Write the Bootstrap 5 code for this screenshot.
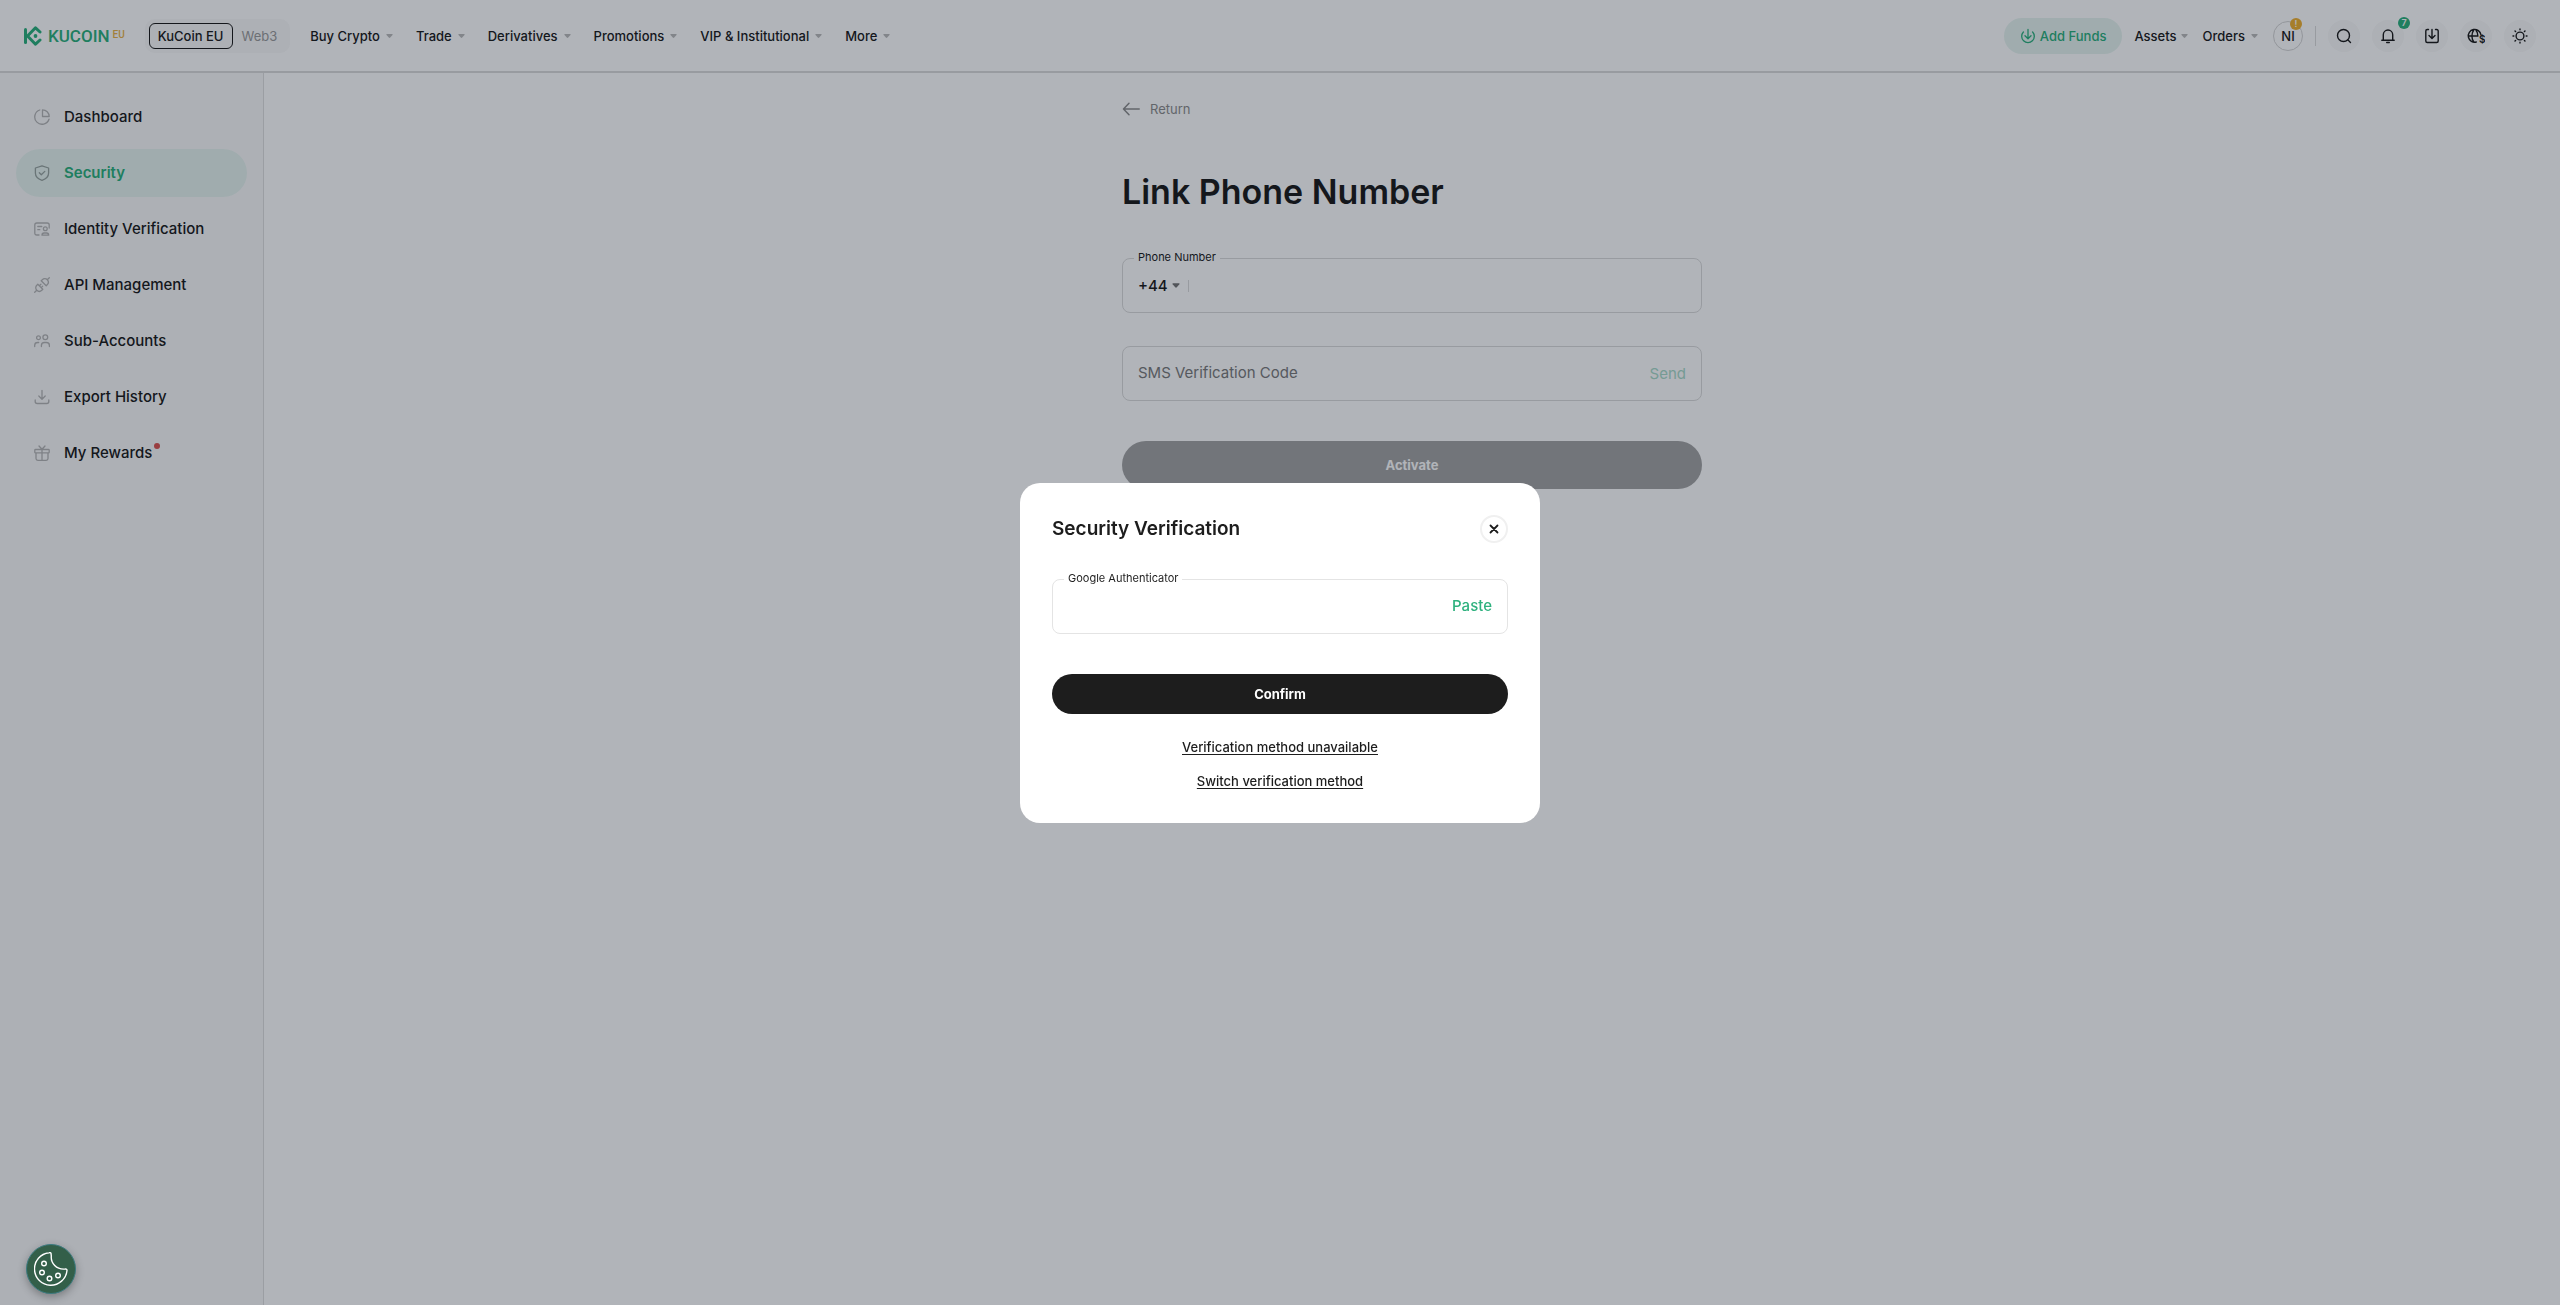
<!DOCTYPE html>
<html lang="en">
<head>
<meta charset="utf-8">
<meta name="viewport" content="width=device-width, initial-scale=1">
<title>Link Phone Number | KuCoin EU</title>
<link rel="stylesheet" href="https://cdn.jsdelivr.net/npm/bootstrap@5.3.0/dist/css/bootstrap.min.css">
<style>
:root{--kc-green:#2eb17e;--kc-ink:#1d1d1d;--kc-tint:#e7f4f0;--kc-line:#dcdcdc;--kc-soft:#f9f9f9;--kc-muted:#bbb}
body{font-family:Inter,"Liberation Sans",sans-serif;color:var(--kc-ink);font-size:13px;line-height:20px;background:#fff}
a{color:inherit;text-decoration:none}
svg{display:block;flex:none}
.line-icon{fill:none;stroke:currentColor;stroke-linecap:round;stroke-linejoin:round}
.shell{min-height:100vh}
.topbar{height:73px;padding:0 24px;border-bottom:2px solid var(--kc-line);font-weight:500}
.brand{color:var(--kc-green);gap:6px;margin-right:20px}
.brand-word{font:500 17px/20px Roboto,sans-serif}
.brand-region{font:500 10px/12px Roboto,sans-serif;color:#eab54a;margin:3px 0 0 3px}
.site-switch{background:var(--kc-soft);border-radius:10px;padding:4px;height:34px;margin-right:20px}
.site-switch button{border:1px solid transparent;background:none;border-radius:6px;padding:0 8px;color:#9c9c9c;font-weight:400}
.site-switch button.on{border-color:var(--kc-ink);color:var(--kc-ink);font-weight:500}
.menu{gap:23px}
.menu-item{gap:6px;border:0;background:none;padding:0;color:inherit;font-weight:500}
.caret{width:7px;height:4px;color:var(--kc-muted)}
.tools,.round-set{gap:12px}
.pair{gap:15px;margin-right:3px}
.funds{background:var(--kc-tint);color:var(--kc-green);height:36px;border-radius:18px;padding:0 16px;gap:4px}
.avatar{width:30px;height:30px;border:1px solid #d4d4d4;border-radius:50%}
.dot-badge{width:12px;height:12px;border-radius:50%;font-size:9px;line-height:12px;font-weight:600;color:#fff;text-align:center;top:-3px}
.dot-badge.warn{background:#f0b133;right:0;top:-4px}
.dot-badge.count{background:var(--kc-green);right:-6px}
.round-btn{width:32px;height:32px;border-radius:50%;background:var(--kc-soft);border:0;padding:0;color:var(--kc-ink)}
.split{width:1px;height:20px;background:var(--kc-line)}
.side{width:264px;background:#fafafa;border-right:1px solid #e0e0e0;padding:20px 16px;gap:8px}
.side-link{height:48px;border-radius:24px;padding:0 18px;gap:14px;font-size:15px;font-weight:500}
.side-link svg{color:#b6b6b6}
.side-link.on{background:var(--kc-tint);color:var(--kc-green);font-weight:600}
.side-link.on svg{color:#99a5a1}
.red-dot{width:6px;height:6px;border-radius:50%;background:#dd5552;margin:0 0 14px -12px}
.form-col{width:580px;padding-top:26px}
.back{color:#8e8e8e;gap:10px}
.page-title{font-size:34px;line-height:48px;font-weight:600;margin:47px 0 42px}
.field{height:55px;border:1px solid var(--kc-line);border-radius:8px;padding:0 15px}
.field + .field{margin-top:33px}
.field-label{font-size:11px;line-height:12px;padding:0 4px;background:#fff;left:11px;top:-8px}
.field input{border:0;outline:0;background:none;min-width:0;color:inherit;font-size:15px;padding:0 0 2px}
.field input::placeholder{color:#7c7c7c;opacity:1}
.code-pick{appearance:none;border:0;background:none;padding:0;font-size:15px;font-weight:500;color:inherit;width:30px}
.field .caret{width:8px;height:5px;color:#777}
.field .split{height:12px}
.text-btn{border:0;background:none;padding:0;font-size:15px;color:var(--kc-green)}
.text-btn:disabled{color:#aadbca}
.pill{border:0;border-radius:24px;background:var(--kc-ink);color:#fff;font-weight:700;height:48px;margin-top:40px}
.pill:disabled{background:#a5a5a5}
.modal-backdrop{background:rgba(0,10,25,.305)}
.verify .modal-dialog{max-width:520px}
.verify .modal-content{border:0;border-radius:20px;padding:32px;color:var(--kc-ink)}
.verify .field{border-color:#e4e4e4;margin-top:36px}
.verify .pill{height:40px}
.verify h2{font-size:19px;line-height:28px;font-weight:600}
.close-btn{width:28px;height:28px;border:2px solid #f0f0f0;border-radius:50%;background:#fff;padding:0;color:var(--kc-ink)}
.help-links{gap:14px;margin-top:23px;font-weight:500}
.help-links a{text-decoration:underline;text-underline-offset:2px}
.cookie{left:26px;bottom:11px;width:50px;height:50px;border-radius:50%;background:#335f49;border:1px solid #3c7a80;color:#fff;padding:0;z-index:1060;box-shadow:0 3px 8px rgba(0,0,0,.3)}
</style>
</head>
<body>
<svg width="0" height="0" class="position-absolute" aria-hidden="true"><symbol id="caret" viewBox="0 0 7 4"><path d="M1 0h5q1 .2.5 1L4.200 3.600q-.7.6-1.400 0L.500 1Q0 .2 1 0Z" fill="currentColor"/></symbol></svg>

<div class="shell d-flex flex-column">
  <header class="topbar d-flex align-items-center">
    <a href="#" class="brand d-flex align-items-center" aria-label="KuCoin EU">
      <svg width="18" height="20" viewBox="0 0 18 20"><g fill="none" stroke="currentColor" stroke-width="3" stroke-linecap="round" stroke-linejoin="round"><path d="M1.500 3.500v13"/><path d="M16 6 11.500 1.800 3.500 10l8 8.200L16 14"/></g><circle cx="11.500" cy="10" r="1.900" fill="currentColor"/></svg>
      <span class="d-flex align-items-start"><span class="brand-word">KUCOIN</span><span class="brand-region">EU</span></span>
    </a>
    <div class="site-switch d-flex">
      <button type="button" class="on">KuCoin EU</button><button type="button">Web3</button>
    </div>
    <nav class="menu d-flex">
      <button type="button" class="menu-item d-flex align-items-center">Buy Crypto<svg class="caret"><use href="#caret"/></svg></button>
      <button type="button" class="menu-item d-flex align-items-center">Trade<svg class="caret"><use href="#caret"/></svg></button>
      <button type="button" class="menu-item d-flex align-items-center">Derivatives<svg class="caret"><use href="#caret"/></svg></button>
      <button type="button" class="menu-item d-flex align-items-center">Promotions<svg class="caret"><use href="#caret"/></svg></button>
      <button type="button" class="menu-item d-flex align-items-center">VIP &amp; Institutional<svg class="caret"><use href="#caret"/></svg></button>
      <button type="button" class="menu-item d-flex align-items-center">More<svg class="caret"><use href="#caret"/></svg></button>
    </nav>
    <div class="tools d-flex align-items-center ms-auto">
      <a href="#" class="funds d-flex align-items-center">
        <svg class="line-icon" width="16" height="16" viewBox="0 0 16 16" stroke-width="1.300"><path d="M8 1.500v9M5 7.700l3 3 3-3M3.400 4A6.300 6.300 0 1 0 12.600 4"/></svg>Add Funds</a>
      <div class="pair d-flex">
        <button type="button" class="menu-item d-flex align-items-center gap-1">Assets<svg class="caret"><use href="#caret"/></svg></button>
        <button type="button" class="menu-item d-flex align-items-center">Orders<svg class="caret"><use href="#caret"/></svg></button>
      </div>
      <a href="#" class="avatar position-relative d-flex align-items-center justify-content-center">NI<span class="dot-badge warn position-absolute">!</span></a>
      <span class="split"></span>
      <div class="round-set d-flex">
        <button type="button" class="round-btn d-flex align-items-center justify-content-center" aria-label="Search"><svg class="line-icon" width="16" height="16" viewBox="0 0 16 16" stroke-width="1.400"><circle cx="7.500" cy="7.500" r="6"/><path d="m12 12 2.500 2.500"/></svg></button>
        <button type="button" class="round-btn position-relative d-flex align-items-center justify-content-center" aria-label="Notifications"><svg class="line-icon" width="16" height="16" viewBox="0 0 16 16" stroke-width="1.400"><path d="M1.800 12.200h12.400M3.300 12V6.700a4.700 4.700 0 0 1 9.400 0V12M6.700 14.500h2.600"/></svg><span class="dot-badge count position-absolute">7</span></button>
        <button type="button" class="round-btn d-flex align-items-center justify-content-center" aria-label="Download"><svg class="line-icon" width="16" height="16" viewBox="0 0 16 16" stroke-width="1.400"><path d="M4.500 1.500H3.300Q1.800 1.500 1.800 3v10q0 1.500 1.500 1.500h9.400q1.500 0 1.500-1.500V3q0-1.500-1.500-1.500h-1.200M8 1.500v8.800M5 7.500l3 3 3-3"/></svg></button>
        <button type="button" class="round-btn d-flex align-items-center justify-content-center" aria-label="Language and currency"><svg width="18" height="16" viewBox="0 0 18 16"><g class="line-icon" stroke-width="1.400"><path d="M9.300 14A6.400 6.400 0 1 1 14 6.800M1.600 8h9.400M7 1.700C4.200 5 4.200 11 7 14.200M8.700 1.700q2 2.600 2 5.300"/></g><text x="12" y="15" font-size="10" font-weight="600" fill="currentColor">$</text></svg></button>
        <button type="button" class="round-btn d-flex align-items-center justify-content-center" aria-label="Theme"><svg class="line-icon" width="16" height="16" viewBox="0 0 16 16" stroke-width="1.400"><circle cx="8" cy="8" r="3.900"/><path d="M8 1v.8M8 14.200v.8M1 8h.8M14.200 8h.8M3 3l.6.6M12.400 12.400l.6.6M3 13l.6-.6M12.400 3.600 13 3"/></svg></button>
      </div>
    </div>
  </header>

  <div class="d-flex flex-grow-1">
    <nav class="side d-flex flex-column flex-shrink-0">
      <a href="#" class="side-link d-flex align-items-center"><svg class="line-icon" width="16" height="16" viewBox="0 0 16 16" stroke-width="1.300"><path d="M5.800 1A7.300 7.300 0 1 0 15 10.200"/><path d="M8.500.8a6.800 6.800 0 0 1 6.700 6.700H8.500Z"/></svg>Dashboard</a>
      <a href="#" class="side-link on d-flex align-items-center"><svg class="line-icon" width="16" height="16" viewBox="0 0 16 16" stroke-width="1.300"><path d="M8 .8 14.600 3v5c0 3.800-2.600 6-6.600 7.300C4 14 1.400 11.800 1.400 8V3Z"/><path d="m5.300 7.800 2 2 3.500-3.400"/></svg>Security</a>
      <a href="#" class="side-link d-flex align-items-center"><svg class="line-icon" width="16" height="16" viewBox="0 0 16 16" stroke-width="1.300"><path d="M5 14H2.800Q.8 14 .8 12V4q0-2 2-2h10.400q2 0 2 2v3M3.800 5.500h4M3.800 8.700h2"/><circle cx="11.300" cy="7.800" r="1.900"/><path d="M8 14.200q0-2.200 2-2.200h2.700q2 0 2 2.200Z"/></svg>Identity Verification</a>
      <a href="#" class="side-link d-flex align-items-center"><svg class="line-icon" width="16" height="16" viewBox="0 0 16 16" stroke-width="1.300"><path d="m.7 15.300 2-2M13.300 2.700l2-2M3.800 7.200l5 5-1 1c-1.400 1.400-3.500 1.500-5 .1s-1.400-3.600 0-5ZM7.200 3.800l5 5 1-1c1.400-1.400 1.500-3.500.1-5s-3.600-1.400-5 0ZM5.400 8.800l1.500-1.500M7.200 10.600l1.500-1.500"/></svg>API Management</a>
      <a href="#" class="side-link d-flex align-items-center"><svg class="line-icon" width="16" height="16" viewBox="0 0 16 16" stroke-width="1.300"><circle cx="4.500" cy="4.800" r="1.900"/><circle cx="11.300" cy="4.300" r="2.400"/><path d="M.7 13.500v-1.200q0-2.800 3-2.800h1M7.400 13.500v-1q0-3 3-3h2q3 0 3 3v1"/></svg>Sub-Accounts</a>
      <a href="#" class="side-link d-flex align-items-center"><svg class="line-icon" width="16" height="16" viewBox="0 0 16 16" stroke-width="1.300"><path d="M8 1.500v8.300M4.800 7 8 10.200 11.200 7M1.200 11v1.500q0 2 2 2h9.600q2 0 2-2V11"/></svg>Export History</a>
      <a href="#" class="side-link d-flex align-items-center"><svg class="line-icon" width="16" height="16" viewBox="0 0 16 16" stroke-width="1.300"><path d="M1.500 4.500h13q.7 0 .7.700v2q0 .7-.7.700h-13q-.7 0-.7-.7v-2q0-.7.700-.7ZM2 8v5.500q0 1.800 1.800 1.800h8.400q1.800 0 1.800-1.800V8M8 4.500v10.800M5 1l3 3.300L11 1"/></svg>My Rewards<span class="red-dot"></span></a>
    </nav>

    <main class="flex-grow-1 d-flex justify-content-center">
      <form class="form-col">
        <a href="#" class="back d-inline-flex align-items-center"><svg class="line-icon" width="18" height="14" viewBox="0 0 18 14" stroke-width="1.500"><path d="M17.200 7H1.500M7 1.200 1.500 7 7 12.800"/></svg>Return</a>
        <h1 class="page-title">Link Phone Number</h1>
        <div class="field position-relative d-flex align-items-center">
          <label class="field-label position-absolute" for="phone">Phone Number</label>
          <select class="code-pick" aria-label="Country code"><option>+44</option></select>
          <svg class="caret ms-1"><use href="#caret"/></svg>
          <span class="split mx-2"></span>
          <input id="phone" type="tel" class="flex-grow-1">
        </div>
        <div class="field d-flex align-items-center">
          <input type="text" class="flex-grow-1" placeholder="SMS Verification Code" aria-label="SMS Verification Code">
          <button type="button" class="text-btn" disabled>Send</button>
        </div>
        <button type="submit" class="pill w-100" disabled>Activate</button>
      </form>
    </main>
  </div>
</div>

<div class="modal-backdrop show opacity-100"></div>
<div class="modal verify show d-block" tabindex="-1" role="dialog" aria-modal="true" aria-labelledby="verify-title">
  <div class="modal-dialog modal-dialog-centered">
    <form class="modal-content">
      <div class="d-flex justify-content-between">
        <h2 id="verify-title" class="mb-0">Security Verification</h2>
        <button type="button" class="close-btn d-flex align-items-center justify-content-center" aria-label="Close"><svg class="line-icon" width="10" height="10" viewBox="0 0 10 10" stroke-width="1.800"><path d="m1.500 1.500 7 7M8.500 1.500l-7 7"/></svg></button>
      </div>
      <div class="field position-relative d-flex align-items-center">
        <label class="field-label position-absolute" for="otp">Google Authenticator</label>
        <input id="otp" type="text" inputmode="numeric" class="flex-grow-1">
        <button type="button" class="text-btn fw-medium">Paste</button>
      </div>
      <button type="submit" class="pill w-100">Confirm</button>
      <div class="help-links d-flex flex-column align-items-center">
        <a href="#">Verification method unavailable</a>
        <a href="#">Switch verification method</a>
      </div>
    </form>
  </div>
</div>

<button type="button" class="cookie position-fixed d-flex align-items-center justify-content-center" aria-label="Cookie settings">
  <svg class="line-icon" width="34" height="34" viewBox="0 0 34 34" stroke-width="1.400"><path d="M17 1.300c-.2-.7-1-.8-2-.6A16.300 16.300 0 1 0 33 18.500c0-1.200-.6-1.700-1.800-1.500-5 .5-7.500-.5-10.500-3.500S17 7 17.300 4Z"/><circle cx="10" cy="11.500" r="2.300"/><circle cx="8" cy="20.500" r="2.300"/><circle cx="15.500" cy="26.500" r="2.300"/><circle cx="24" cy="23.500" r="2.300"/></svg>
</button>
<script src="https://cdn.jsdelivr.net/npm/bootstrap@5.3.0/dist/js/bootstrap.bundle.min.js"></script>
</body>
</html>
